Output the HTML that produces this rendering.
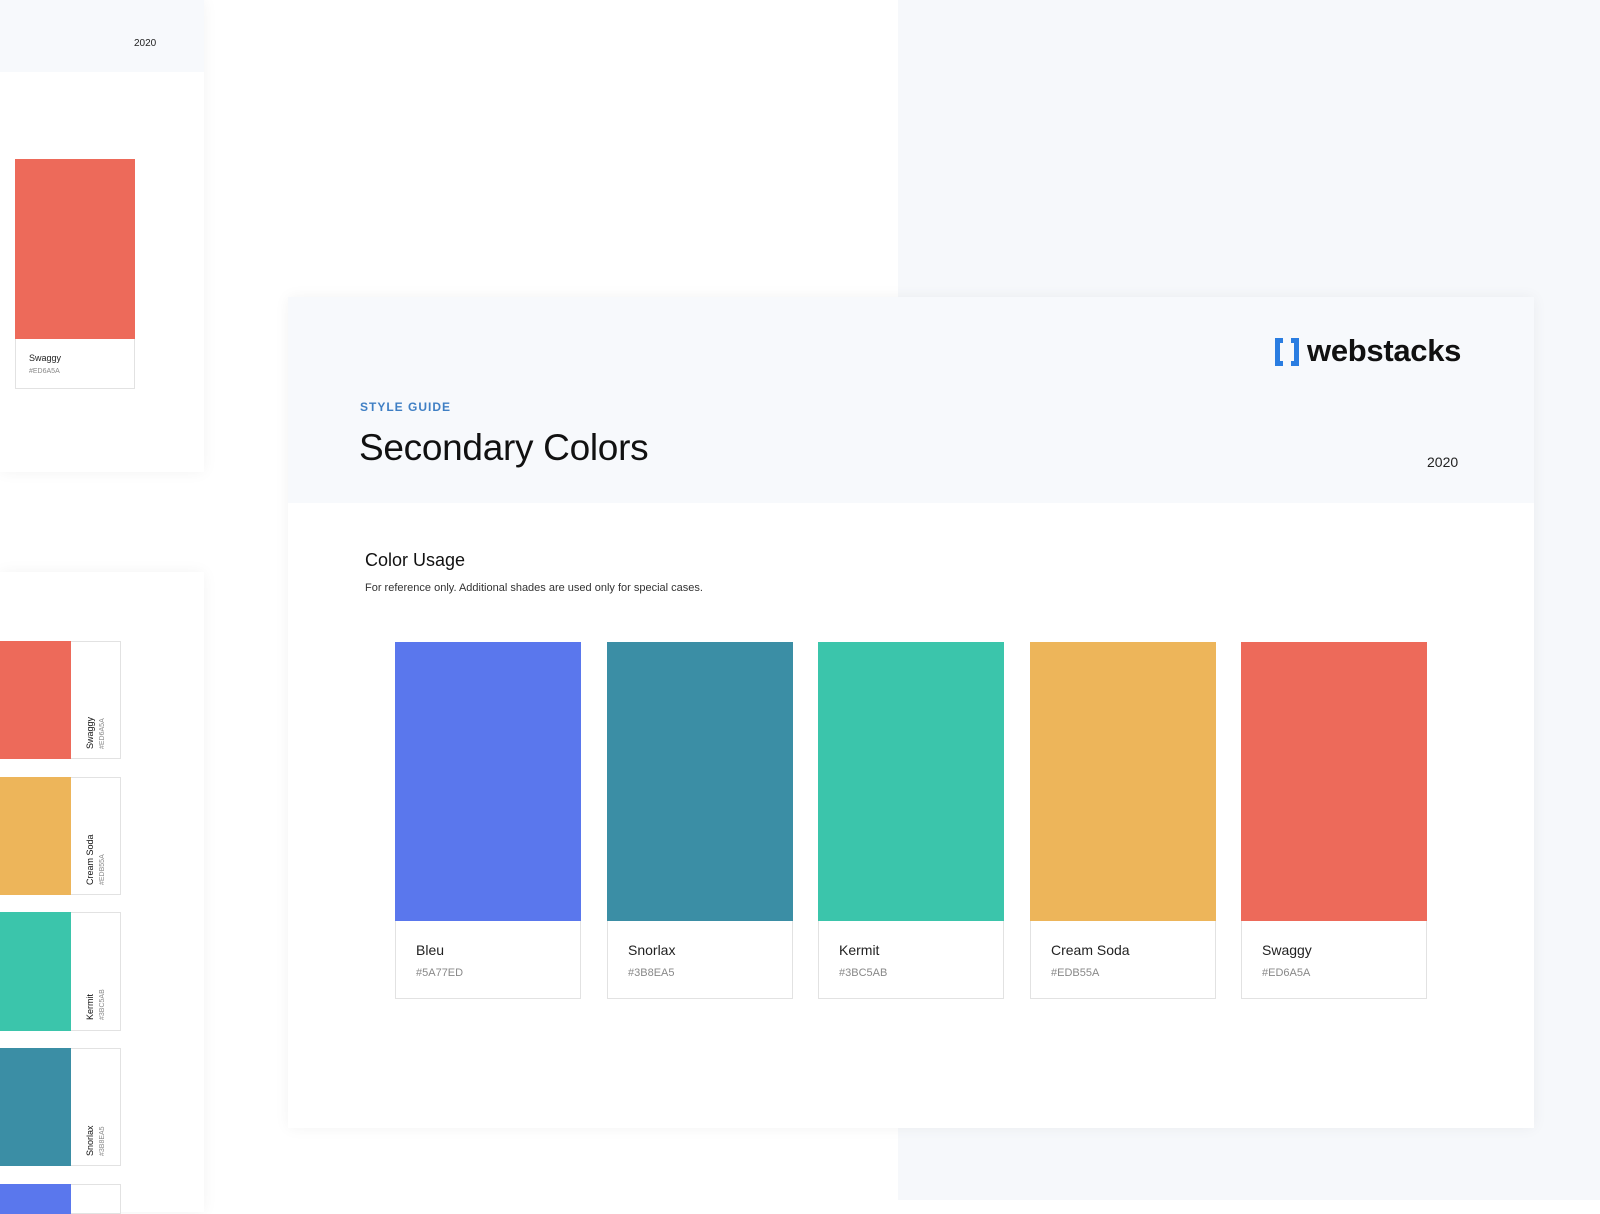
<!DOCTYPE html>
<html><head><meta charset="utf-8"><style>
*{margin:0;padding:0;box-sizing:border-box}
body{width:1600px;height:1200px;position:relative;overflow:hidden;background:#fff;font-family:"Liberation Sans",sans-serif;color:#111}
.abs{position:absolute}
.rbg{left:898px;top:0;width:702px;height:1200px;background:#f6f8fb}
.card{background:#fff;box-shadow:0 0 14px rgba(0,0,0,0.05)}
.sw{position:absolute;border:1px solid #e2e2e2;background:#fff}
.sw .c{position:absolute;left:-1px;top:-1px;right:-1px}
.nm{position:absolute;font-size:14px;color:#222}
.hx{position:absolute;font-size:11px;color:#888}
.vl{position:absolute;transform:rotate(-90deg);transform-origin:left top;white-space:nowrap}
</style></head><body>
<div class="abs rbg"></div>
<div class="abs card" style="left:0;top:0;width:204px;height:472px">
  <div class="abs" style="left:0;top:0;width:204px;height:72px;background:#f7f9fc"></div>
  <div class="abs" style="left:134px;top:38px;font-size:10px;color:#222">2020</div>
  <div class="sw" style="left:15px;top:159px;width:120px;height:230px">
    <div class="c" style="height:180px;background:#ED6A5A"></div>
    <div class="abs" style="left:13px;top:193px;font-size:9px;color:#222">Swaggy</div>
    <div class="abs" style="left:13px;top:208px;font-size:7px;color:#888">#ED6A5A</div>
  </div>
</div>
<div class="abs card" style="left:0;top:572px;width:204px;height:640px"></div>
<div class="sw" style="left:-1px;top:641px;width:122px;height:118px"><div class="abs" style="left:0;top:-1px;width:71px;height:118px;background:#ED6A5A"></div><div class="vl" style="left:85px;top:107px;font-size:9px">Swaggy</div><div class="vl" style="left:99px;top:107px;font-size:7px;color:#888">#ED6A5A</div></div>
<div class="sw" style="left:-1px;top:777px;width:122px;height:118px"><div class="abs" style="left:0;top:-1px;width:71px;height:118px;background:#EDB55A"></div><div class="vl" style="left:85px;top:107px;font-size:9px">Cream Soda</div><div class="vl" style="left:99px;top:107px;font-size:7px;color:#888">#EDB55A</div></div>
<div class="sw" style="left:-1px;top:912px;width:122px;height:119px"><div class="abs" style="left:0;top:-1px;width:71px;height:119px;background:#3BC5AB"></div><div class="vl" style="left:85px;top:107px;font-size:9px">Kermit</div><div class="vl" style="left:99px;top:107px;font-size:7px;color:#888">#3BC5AB</div></div>
<div class="sw" style="left:-1px;top:1048px;width:122px;height:118px"><div class="abs" style="left:0;top:-1px;width:71px;height:118px;background:#3B8EA5"></div><div class="vl" style="left:85px;top:107px;font-size:9px">Snorlax</div><div class="vl" style="left:99px;top:107px;font-size:7px;color:#888">#3B8EA5</div></div>
<div class="sw" style="left:-1px;top:1184px;width:122px;height:30px"><div class="abs" style="left:0;top:-1px;width:71px;height:30px;background:#5A77ED"></div></div>
<div class="abs card" style="left:288px;top:297px;width:1246px;height:831px">
  <div class="abs" style="left:0;top:0;width:1246px;height:206px;background:#f7f9fc"></div>
  <div class="abs" style="left:72px;top:103px;font-size:12px;font-weight:bold;letter-spacing:1px;color:#3f7fc4">STYLE GUIDE</div>
  <div class="abs" style="left:71px;top:130px;font-size:37px;color:#111;letter-spacing:-0.3px">Secondary Colors</div>
  <div class="abs" style="left:1139px;top:157px;font-size:14px;color:#222">2020</div>
  <svg class="abs" style="left:987px;top:41px" width="24" height="28" viewBox="0 0 24 28"><path d="M0 0h8v5H5v18h3v5H0z M24 0h-8v5h3v18h-3v5h8z" fill="#2a7de1"/></svg>
  <div class="abs" style="left:1019px;top:36px;font-size:31px;font-weight:bold;color:#111;letter-spacing:-0.3px">webstacks</div>
  <div class="abs" style="left:77px;top:253px;font-size:18px;color:#111">Color Usage</div>
  <div class="abs" style="left:77px;top:285px;font-size:11px;color:#333">For reference only. Additional shades are used only for special cases.</div>
</div>
<div class="sw" style="left:395px;top:642px;width:186px;height:357px"><div class="c" style="height:279px;background:#5A77ED"></div><div class="nm" style="left:20px;top:299px">Bleu</div><div class="hx" style="left:20px;top:324px">#5A77ED</div></div>
<div class="sw" style="left:607px;top:642px;width:186px;height:357px"><div class="c" style="height:279px;background:#3B8EA5"></div><div class="nm" style="left:20px;top:299px">Snorlax</div><div class="hx" style="left:20px;top:324px">#3B8EA5</div></div>
<div class="sw" style="left:818px;top:642px;width:186px;height:357px"><div class="c" style="height:279px;background:#3BC5AB"></div><div class="nm" style="left:20px;top:299px">Kermit</div><div class="hx" style="left:20px;top:324px">#3BC5AB</div></div>
<div class="sw" style="left:1030px;top:642px;width:186px;height:357px"><div class="c" style="height:279px;background:#EDB55A"></div><div class="nm" style="left:20px;top:299px">Cream Soda</div><div class="hx" style="left:20px;top:324px">#EDB55A</div></div>
<div class="sw" style="left:1241px;top:642px;width:186px;height:357px"><div class="c" style="height:279px;background:#ED6A5A"></div><div class="nm" style="left:20px;top:299px">Swaggy</div><div class="hx" style="left:20px;top:324px">#ED6A5A</div></div>
</body></html>
